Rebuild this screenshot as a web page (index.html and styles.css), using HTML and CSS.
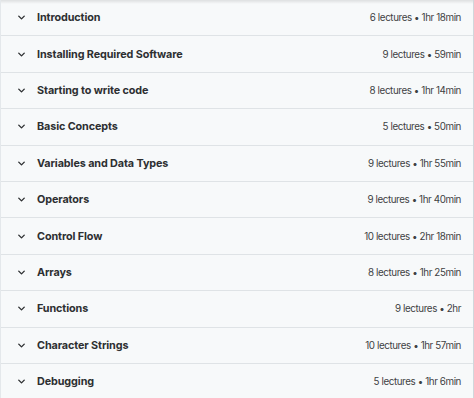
FILE: index.html
```html
<!DOCTYPE html>
<html lang="en">
<head>
<meta charset="UTF-8">
<title>Course content</title>
<link rel="stylesheet" href="styles.css">
</head>
<body>
<div class="curriculum">

  <div class="section">
    <svg class="chev" viewBox="0 0 24 24"><path d="M6 9l6 6 6-6"/></svg>
    <span class="section-title">Introduction</span>
    <span class="section-meta">6 lectures • 1hr 18min</span>
  </div>

  <div class="section">
    <svg class="chev" viewBox="0 0 24 24"><path d="M6 9l6 6 6-6"/></svg>
    <span class="section-title">Installing Required Software</span>
    <span class="section-meta">9 lectures • 59min</span>
  </div>

  <div class="section">
    <svg class="chev" viewBox="0 0 24 24"><path d="M6 9l6 6 6-6"/></svg>
    <span class="section-title">Starting to write code</span>
    <span class="section-meta">8 lectures • 1hr 14min</span>
  </div>

  <div class="section">
    <svg class="chev" viewBox="0 0 24 24"><path d="M6 9l6 6 6-6"/></svg>
    <span class="section-title">Basic Concepts</span>
    <span class="section-meta">5 lectures • 50min</span>
  </div>

  <div class="section">
    <svg class="chev" viewBox="0 0 24 24"><path d="M6 9l6 6 6-6"/></svg>
    <span class="section-title">Variables and Data Types</span>
    <span class="section-meta">9 lectures • 1hr 55min</span>
  </div>

  <div class="section">
    <svg class="chev" viewBox="0 0 24 24"><path d="M6 9l6 6 6-6"/></svg>
    <span class="section-title">Operators</span>
    <span class="section-meta">9 lectures • 1hr 40min</span>
  </div>

  <div class="section">
    <svg class="chev" viewBox="0 0 24 24"><path d="M6 9l6 6 6-6"/></svg>
    <span class="section-title">Control Flow</span>
    <span class="section-meta">10 lectures • 2hr 18min</span>
  </div>

  <div class="section">
    <svg class="chev" viewBox="0 0 24 24"><path d="M6 9l6 6 6-6"/></svg>
    <span class="section-title">Arrays</span>
    <span class="section-meta">8 lectures • 1hr 25min</span>
  </div>

  <div class="section">
    <svg class="chev" viewBox="0 0 24 24"><path d="M6 9l6 6 6-6"/></svg>
    <span class="section-title">Functions</span>
    <span class="section-meta">9 lectures • 2hr</span>
  </div>

  <div class="section">
    <svg class="chev" viewBox="0 0 24 24"><path d="M6 9l6 6 6-6"/></svg>
    <span class="section-title">Character Strings</span>
    <span class="section-meta">10 lectures • 1hr 57min</span>
  </div>

  <div class="section">
    <svg class="chev" viewBox="0 0 24 24"><path d="M6 9l6 6 6-6"/></svg>
    <span class="section-title">Debugging</span>
    <span class="section-meta">5 lectures • 1hr 6min</span>
  </div>

</div>
</body>
</html>
```

FILE: styles.css
```css
*, *::before, *::after { box-sizing: border-box; margin: 0; padding: 0; }

body {
  font-family: Inter, 'Noto Sans', sans-serif;
  background: #ffffff;
  color: #2d2f31;
  width: 474px;
  height: 398px;
  overflow: hidden;
}

.curriculum {
  position: relative;
  border-right: 1px solid #d1d7dc;
  border-left: 1px solid #e4e8eb;
  background: #f7f9fa;
  min-height: 398px;
}

/* shadow from the sticky header above */
.curriculum::before {
  content: '';
  position: absolute;
  top: 0;
  left: 0;
  right: 0;
  height: 4px;
  background: linear-gradient(rgba(0,0,0,0.10), rgba(0,0,0,0));
}

.section {
  display: flex;
  align-items: center;
  height: 36.4px;
  padding: 0 12px 0 15px;
  border-bottom: 1px solid #dfe3e6;
}

.chev {
  width: 11px;
  height: 11px;
  fill: none;
  stroke: #2d2f31;
  stroke-width: 3;
  stroke-linecap: round;
  stroke-linejoin: round;
  flex-shrink: 0;
  margin-right: 10px;
}

.section-title {
  flex: 1;
  font-size: 10.8px;
  font-weight: 700;
  letter-spacing: -0.1px;
}

.section-meta {
  font-size: 9.8px;
  color: #3e4143;
  letter-spacing: -0.4px;
}
```
